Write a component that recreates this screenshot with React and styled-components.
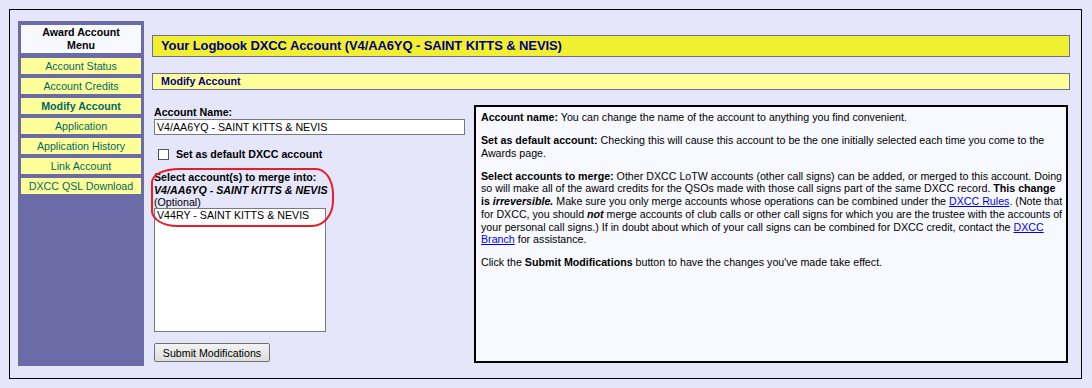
import styled, { createGlobalStyle } from "styled-components";

const Colors = {
    Lavender: '#e6e6fa',
    Purple: '#6b6ba8',
    Yellow: '#ffff99',
    TitleYellow: '#f0f030',
    Navy: '#000080',
    Teal: '#006666',
    Ghost: '#f8f8ff',
};

const menu = [
    { id: 1, label: 'Account Status' },
    { id: 2, label: 'Account Credits' },
    { id: 3, label: 'Modify Account', active: true },
    { id: 4, label: 'Application' },
    { id: 5, label: 'Application History' },
    { id: 6, label: 'Link Account' },
    { id: 7, label: 'DXCC QSL Download' },
];

const GlobalStyle = createGlobalStyle`
    html, body {
        margin: 0;
        padding: 0;
        background: ${Colors.Lavender};
        font-family: "Liberation Sans", Arial, sans-serif;
        font-size: 8pt;
        color: #000;
    }
`;

const Frame = styled.div`
    box-sizing: border-box;
    margin: 9px 0 0 9px;
    width: 1073px;
    height: 370px;
    border: 1px solid #000;
    display: flex;
    align-items: flex-start;
    padding: 11px 11px 0 8px;
`;

const Sidebar = styled.nav`
    box-sizing: border-box;
    width: 126px;
    height: 345px;
    flex-shrink: 0;
    background: ${Colors.Purple};
    padding: 4px 3px;
    display: flex;
    flex-direction: column;
    gap: 4px;
`;

const MenuHead = styled.div`
    background: ${Colors.Ghost};
    text-align: center;
    font-weight: bold;
    line-height: 12.7px;
    padding: 1px 0 2px;
    margin-bottom: 1px;
`;

const MenuItem = styled.a`
    display: block;
    background: ${Colors.Yellow};
    color: ${Colors.Teal};
    text-align: center;
    line-height: 16px;
    font-weight: ${p => (p.$active ? 'bold' : 'normal')};
    text-decoration: none;
    cursor: pointer;
`;

const Main = styled.main`
    flex: 1;
    margin-left: 8px;
    display: flex;
    flex-direction: column;
`;

const TitleBar = styled.h1`
    margin: 14px 0 0;
    box-sizing: border-box;
    height: 22px;
    background: ${Colors.TitleYellow};
    border: 1px solid ${Colors.Purple};
    color: ${Colors.Navy};
    font-size: 13px;
    letter-spacing: -0.1px;
    font-weight: bold;
    line-height: 20px;
    padding-left: 8px;
`;

const SubBar = styled.h2`
    margin: 16px 0 0;
    box-sizing: border-box;
    height: 17px;
    background: ${Colors.Yellow};
    border: 1px solid ${Colors.Purple};
    color: ${Colors.Navy};
    font-size: 8pt;
    font-weight: bold;
    line-height: 15px;
    padding-left: 8px;
`;

const Body = styled.div`
    display: flex;
    align-items: flex-start;
    margin-top: 15px;
    padding-left: 2px;
`;

const Form = styled.form`
    width: 320px;
    display: flex;
    flex-direction: column;
    position: relative;
`;

const Label = styled.label`
    font-weight: bold;
    line-height: 12.7px;
    margin-top: 1px;
`;

const TextInput = styled.input`
    box-sizing: border-box;
    width: 311px;
    height: 16px;
    border: 1px solid #7a7a7a;
    font: inherit;
    padding: 0 2px;
    margin: 0;
    background: #fff;
`;

const CheckRow = styled.label`
    display: flex;
    align-items: center;
    gap: 7px;
    margin: 13px 0 0 4px;
    font-weight: bold;
    line-height: 12.7px;
`;

const Box = styled.span`
    box-sizing: border-box;
    width: 11px;
    height: 11px;
    border: 1px solid #555;
    background: #fff;
`;

const MergeLabel = styled.div`
    margin-top: 11px;
    line-height: 12.3px;
`;

const Strong = styled.b`
    font-style: ${p => (p.$italic ? 'italic' : 'normal')};
`;

const ListBox = styled.div`
    box-sizing: border-box;
    width: 172px;
    height: 124px;
    border: 1px solid #7a7a7a;
    background: #fff;
    margin-top: 0;
    padding: 0 2px;
    line-height: 12.7px;
`;

const Ring = styled.div`
    position: absolute;
    left: -3px;
    top: 63px;
    width: 183px;
    height: 59px;
    box-sizing: border-box;
    border: 2px solid #e41f2a;
    border-radius: 28px 18px 22px 26px / 14px 26px 26px 16px;
    pointer-events: none;
`;

const Submit = styled.button`
    align-self: flex-start;
    margin-top: 11px;
    box-sizing: border-box;
    width: 116px;
    height: 19px;
    border: 1px solid #707070;
    border-radius: 2px;
    background: linear-gradient(#f3f3f3, #dddddd);
    font: inherit;
    color: #000;
    padding: 0;
`;

const Help = styled.div`
    box-sizing: border-box;
    width: 594px;
    height: 258px;
    border: 2px solid #000;
    background: ${Colors.Ghost};
    padding: 4px 0 0 5px;
    line-height: 12.7px;

    p {
        margin: 0 0 10.3px;
    }

    a {
        color: #0000ee;
    }
`;

export default function App() {
    return (
        <>
            <GlobalStyle />
            <Frame>
                <Sidebar>
                    <MenuHead>Award Account<br />Menu</MenuHead>
                    {menu.map(item => (
                        <MenuItem key={item.id} $active={item.active}>{item.label}</MenuItem>
                    ))}
                </Sidebar>
                <Main>
                    <TitleBar>Your Logbook DXCC Account (V4/AA6YQ - SAINT KITTS &amp; NEVIS)</TitleBar>
                    <SubBar>Modify Account</SubBar>
                    <Body>
                        <Form onSubmit={e => e.preventDefault()}>
                            <Label>Account Name:</Label>
                            <TextInput defaultValue="V4/AA6YQ - SAINT KITTS & NEVIS" />
                            <CheckRow><Box />Set as default DXCC account</CheckRow>
                            <MergeLabel>
                                <b>Select account(s) to merge into:</b><br />
                                <Strong $italic>V4/AA6YQ - SAINT KITTS &amp; NEVIS</Strong><br />
                                (Optional)
                            </MergeLabel>
                            <ListBox>V44RY - SAINT KITTS &amp; NEVIS</ListBox>
                            <Ring />
                            <Submit type="submit">Submit Modifications</Submit>
                        </Form>
                        <Help>
                            <p><b>Account name:</b> You can change the name of the account to anything you find convenient.</p>
                            <p><b>Set as default account:</b> Checking this will cause this account to be the one initially selected each time you come to the Awards page.</p>
                            <p>
                                <b>Select accounts to merge:</b> Other DXCC LoTW accounts (other call signs) can be added, or merged to this account. Doing so will make all of the award credits for the QSOs made with those call signs part of the same DXCC record. <b>This change is <i>irreversible.</i></b> Make sure you only merge accounts whose operations can be combined under the <a href="#">DXCC Rules</a>. (Note that for DXCC, you should <b><i>not</i></b> merge accounts of club calls or other call signs for which you are the trustee with the accounts of your personal call signs.) If in doubt about which of your call signs can be combined for DXCC credit, contact the <a href="#">DXCC Branch</a> for assistance.
                            </p>
                            <p>Click the <b>Submit Modifications</b> button to have the changes you've made take effect.</p>
                        </Help>
                    </Body>
                </Main>
            </Frame>
        </>
    );
}
